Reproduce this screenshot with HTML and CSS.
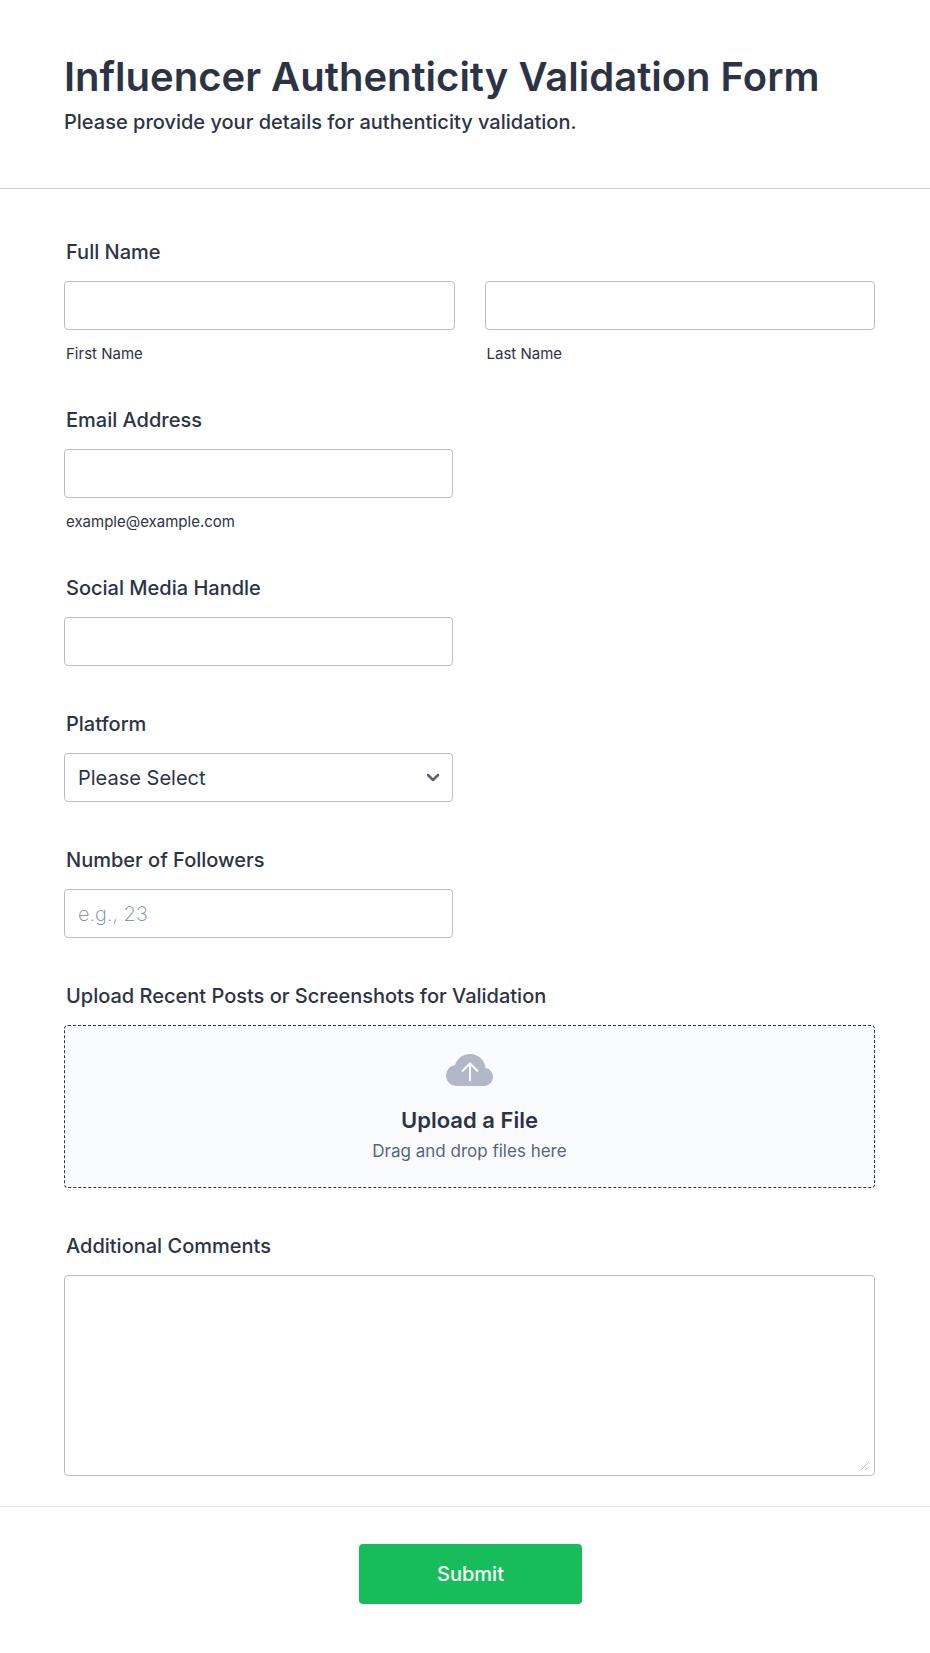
FILE: index.html
```html
<!DOCTYPE html>
<html lang="en">
<head>
<meta charset="utf-8">
<meta name="viewport" content="width=device-width, initial-scale=1">
<title>Influencer Authenticity Validation Form</title>
<link rel="stylesheet" href="styles.css">
</head>
<body>
<form class="form">
  <header class="form-header">
    <h1 class="form-title">Influencer Authenticity Validation Form</h1>
    <p class="form-subtitle">Please provide your details for authenticity validation.</p>
  </header>

  <div class="form-body">
    <div class="field" role="group" aria-labelledby="name-label">
      <span class="label" id="name-label">Full Name</span>
      <div class="name-row">
        <div class="name-part">
          <input class="control" type="text" id="first-name">
          <label class="hint" for="first-name">First Name</label>
        </div>
        <div class="name-part">
          <input class="control" type="text" id="last-name">
          <label class="hint" for="last-name">Last Name</label>
        </div>
      </div>
    </div>

    <div class="field">
      <label class="label" for="email">Email Address</label>
      <input class="control half" type="email" id="email" aria-describedby="email-hint">
      <span class="hint" id="email-hint">example@example.com</span>
    </div>

    <div class="field">
      <label class="label" for="handle">Social Media Handle</label>
      <input class="control half" type="text" id="handle">
    </div>

    <div class="field">
      <label class="label" for="platform">Platform</label>
      <div class="stack half">
        <select class="control" id="platform">
          <option>Please Select</option>
        </select>
        <svg class="chevron" viewBox="0 0 14 9" aria-hidden="true"><path d="M2 2L7 7 12 2"/></svg>
      </div>
    </div>

    <div class="field">
      <label class="label" for="followers">Number of Followers</label>
      <input class="control half" type="number" id="followers" placeholder="e.g., 23">
    </div>

    <div class="field">
      <span class="label" id="upload-label">Upload Recent Posts or Screenshots for Validation</span>
      <button class="dropzone" type="button" aria-describedby="upload-label">
        <svg class="cloud" viewBox="0 0 48 33" aria-hidden="true">
          <path class="cloud-shape" d="M10.500 33A10.500 10.500 0 0 1 9 12.100A15.600 15.600 0 0 1 39.500 15A9.100 9.100 0 0 1 39 33Z"/>
          <path class="cloud-arrow" d="M24 28V10.500M16 18.500l8-8 8 8"/>
        </svg>
        <span class="dropzone-title">Upload a File</span>
        <span class="dropzone-text">Drag and drop files here</span>
      </button>
    </div>

    <div class="field">
      <label class="label" for="comments">Additional Comments</label>
      <div class="stack">
        <textarea class="control comments" id="comments"></textarea>
        <svg class="grip" viewBox="0 0 10 10" aria-hidden="true"><path d="M1 9l8-8M5.500 9L9 5.500"/></svg>
      </div>
    </div>
  </div>

  <footer class="form-footer">
    <button class="submit" type="submit">Submit</button>
  </footer>
</form>
</body>
</html>
```

FILE: styles.css
```css
* {
  box-sizing: border-box;
}

body {
  margin: 0;
  background: #fff;
  color: #2c3345;
  font-family: Inter, "Liberation Sans", sans-serif;
}

.form-header {
  padding: 52px 55px 54px 64px;
  border-bottom: 1px solid #d3d5e3;
}

.form-title {
  margin: 0;
  font-size: 40px;
  line-height: 50px;
  font-weight: 600;
}

.form-subtitle {
  margin: 8px 0 0;
  font-size: 20px;
  line-height: 24px;
  font-weight: 500;
}

.form-body {
  display: flex;
  flex-direction: column;
  gap: 46px;
  padding: 51px 55px 30px 64px;
}

.field {
  display: flex;
  flex-direction: column;
}

.label {
  margin-bottom: 17px;
  padding-left: 2px;
  font-size: 20px;
  line-height: 24px;
  font-weight: 500;
}

.name-row {
  display: grid;
  grid-template-columns: 1fr 1fr;
  gap: 30px;
}

.name-part {
  display: flex;
  flex-direction: column;
}

.control {
  width: 100%;
  height: 49px;
  margin: 0;
  padding: 0 13px;
  border: 1px solid #b8bdc9;
  border-radius: 4px;
  background: #fff;
  color: #2c3345;
  font: inherit;
  font-size: 20px;
}

.control::placeholder {
  color: #748c9e;
  font-weight: 200;
  opacity: 1;
}

.half {
  width: 48%;
}

.hint {
  margin-top: 15px;
  padding-left: 2px;
  font-size: 15px;
  line-height: 17px;
}

.stack {
  display: grid;
  align-items: center;
}

.stack > * {
  grid-area: 1 / 1;
}

.stack select {
  appearance: none;
}

.chevron {
  justify-self: end;
  width: 14px;
  height: 9px;
  margin-right: 13px;
  fill: none;
  stroke: #5a6078;
  stroke-width: 2.5;
  stroke-linecap: round;
  stroke-linejoin: round;
  pointer-events: none;
}

.dropzone {
  display: flex;
  flex-direction: column;
  align-items: center;
  padding: 27px 16px 23px;
  border: 1px dashed #2c3345;
  border-radius: 4px;
  background: #fafbfe;
  color: inherit;
  font: inherit;
}

.cloud {
  width: 48px;
  height: 33px;
  overflow: visible;
}

.cloud-shape {
  fill: #b2b8c8;
}

.cloud-arrow {
  fill: none;
  stroke: #fafbfe;
  stroke-width: 2;
}

.dropzone-title {
  margin-top: 19px;
  font-size: 22px;
  line-height: 30px;
  font-weight: 600;
}

.dropzone-text {
  margin-top: 3px;
  color: #57647e;
  font-size: 17px;
  line-height: 26px;
}

.comments {
  display: block;
  height: 201px;
  padding: 12px;
  resize: vertical;
}

.comments::-webkit-resizer {
  background: transparent;
}

.grip {
  align-self: end;
  justify-self: end;
  width: 10px;
  height: 10px;
  margin: 0 5px 5px 0;
  fill: none;
  stroke: #b8bdc9;
  stroke-width: 1;
  pointer-events: none;
}

.form-footer {
  display: flex;
  justify-content: center;
  padding: 37px 53px 48px 64px;
  border-top: 1px solid #e6e7f0;
}

.submit {
  min-width: 223px;
  height: 60px;
  border: 0;
  border-radius: 4px;
  background: #18bd5b;
  color: #fff;
  font: inherit;
  font-size: 20px;
  font-weight: 500;
}
```
